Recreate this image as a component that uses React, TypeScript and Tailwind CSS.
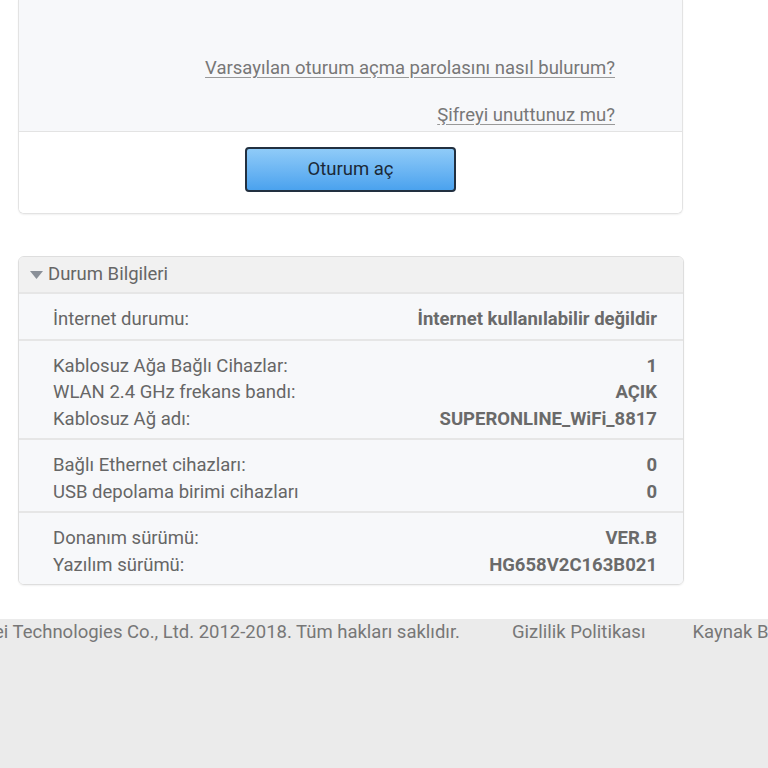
import React from "react";

const font = { fontFamily: "Roboto, 'Noto Sans', Arial, sans-serif" };

type Row = { label: string; value: string };

const sections: Row[][] = [
  [{ label: "İnternet durumu:", value: "İnternet kullanılabilir değildir" }],
  [
    { label: "Kablosuz Ağa Bağlı Cihazlar:", value: "1" },
    { label: "WLAN 2.4 GHz frekans bandı:", value: "AÇIK" },
    { label: "Kablosuz Ağ adı:", value: "SUPERONLINE_WiFi_8817" },
  ],
  [
    { label: "Bağlı Ethernet cihazları:", value: "0" },
    { label: "USB depolama birimi cihazları", value: "0" },
  ],
  [
    { label: "Donanım sürümü:", value: "VER.B" },
    { label: "Yazılım sürümü:", value: "HG658V2C163B021" },
  ],
];

const LoginCard = () => (
  <div className="ml-[18px] w-[665px] border-x border-b border-[#e3e3e3] rounded-b-[6px] shadow-[0_1px_2px_rgba(0,0,0,0.06)] overflow-hidden">
    <div className="bg-[#f7f8fa] h-[131px] flex flex-col items-end pr-[67px] pt-[56px]">
      <a className="text-[18.5px] leading-[24px] text-[#777] underline underline-offset-[3px] decoration-[#999]">
        Varsayılan oturum açma parolasını nasıl bulurum?
      </a>
      <a className="mt-[23px] text-[18.5px] leading-[24px] text-[#777] underline underline-offset-[3px] decoration-[#999]">
        Şifreyi unuttunuz mu?
      </a>
    </div>
    <div className="border-t border-[#e3e3e3] bg-white pt-[15px] pb-[21px] flex justify-center">
      <button className="w-[211px] h-[45px] rounded-[4px] border-2 border-[#223040] bg-gradient-to-b from-[#8fcbf8] to-[#4aa2ee] text-[18.5px] text-[#1b2938]">
        Oturum aç
      </button>
    </div>
  </div>
);

const StatusPanel = () => (
  <div className="mt-[42px] ml-[18px] w-[666px] border border-[#dedede] rounded-[6px] overflow-hidden shadow-[0_1px_2px_rgba(0,0,0,0.06)]">
    <div className="h-[35px] bg-[#f1f1f1] flex items-center pl-[11px] text-[18.5px] text-[#666]">
      <svg width="13" height="8" viewBox="0 0 13 8" className="mr-[5px]">
        <path d="M0 0 L13 0 L6.5 8 Z" fill="#8a9098" />
      </svg>
      Durum Bilgileri
    </div>
    {sections.map((rows, i) => (
      <div
        key={i}
        className="border-t-2 border-[#e6e6e6] bg-[#f7f8fa] pt-[13px] pb-[5px] pl-[34px] pr-[26px]"
      >
        {rows.map((r) => (
          <div
            key={r.label}
            className="flex justify-between items-center h-[26.5px] text-[18.5px] text-[#666]"
          >
            <span>{r.label}</span>
            <span className="font-bold text-[#6a6a6a]">{r.value}</span>
          </div>
        ))}
      </div>
    ))}
  </div>
);

const Footer = () => (
  <div className="mt-[34px] flex-1 bg-[#ebebeb]">
    <div className="flex h-[28px] items-center text-[18.5px] text-[#777] whitespace-nowrap">
      <div className="w-[460px] shrink-0 flex justify-end">
        <span>Telif Hakkı © Huawei Technologies Co., Ltd. 2012-2018. Tüm hakları saklıdır.</span>
      </div>
      <span className="ml-[52px] shrink-0">Gizlilik Politikası</span>
      <span className="ml-[47px] shrink-0">Kaynak Bildirimi</span>
    </div>
  </div>
);

export default function App() {
  return (
    <div style={font} className="w-[768px] h-[768px] bg-white overflow-hidden flex flex-col">
      <LoginCard />
      <StatusPanel />
      <Footer />
    </div>
  );
}
